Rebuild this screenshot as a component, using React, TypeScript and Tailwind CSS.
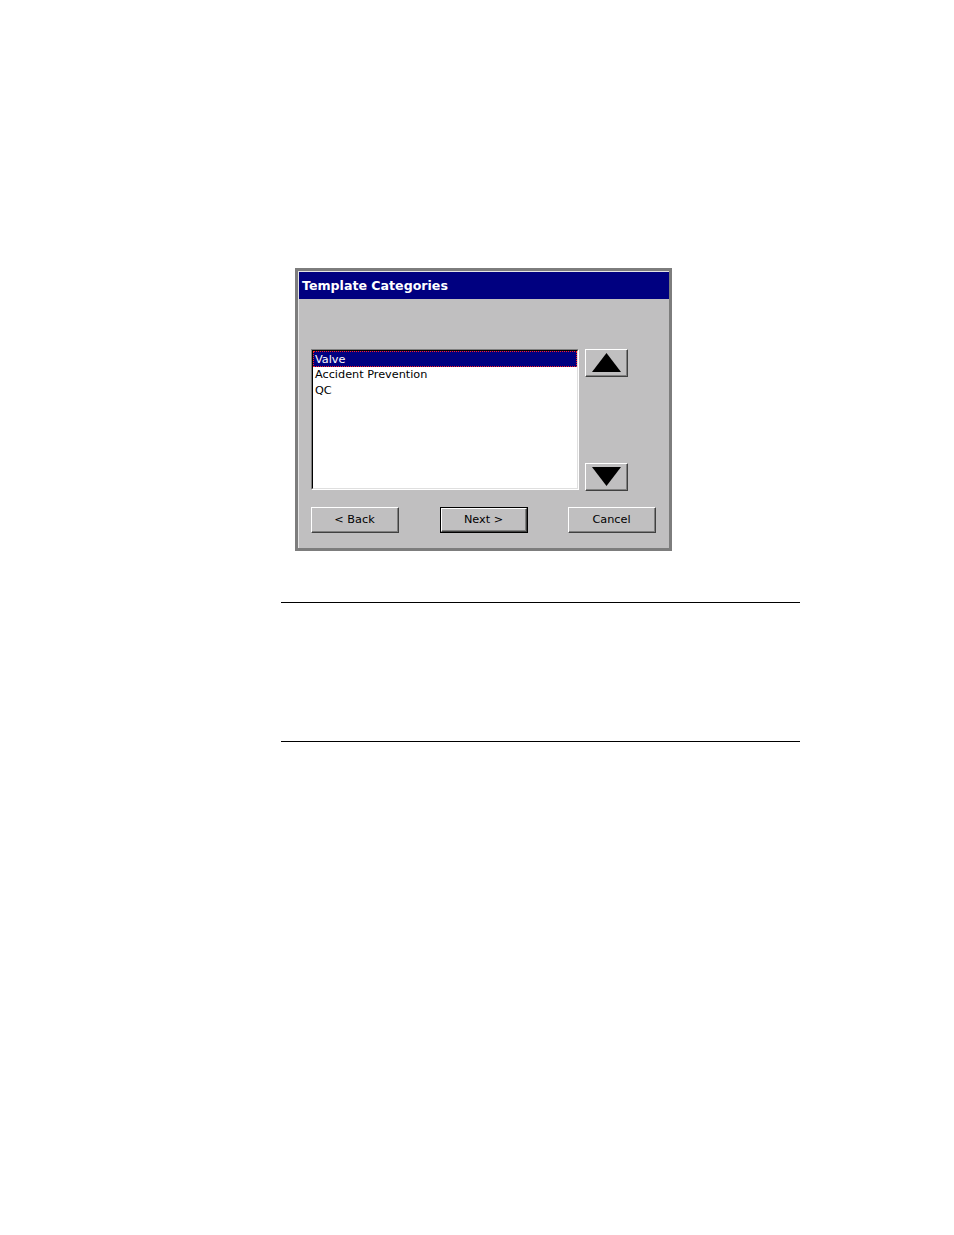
import React from 'react';

const font = { fontFamily: '"DejaVu Sans", Verdana, sans-serif' };

function WinButton({ label, isDefault }: { label: string; isDefault?: boolean }) {
  const inner = (
    <div className="h-full w-full border-t border-l border-t-white border-l-white border-r border-b border-r-[#404040] border-b-[#404040]">
      <div className="h-full w-full border-r border-b border-r-[#808080] border-b-[#808080] flex items-center justify-center pt-[2px] text-[11.25px] text-black">
        {label}
      </div>
    </div>
  );
  return (
    <div className={`h-[26px] w-[88px] ${isDefault ? 'border border-black' : ''}`}>
      {inner}
    </div>
  );
}

function ArrowButton({ dir }: { dir: 'up' | 'down' }) {
  return (
    <div className="h-[28px] w-[43px] border-t border-l border-t-white border-l-white border-r border-b border-r-[#404040] border-b-[#404040]">
      <div className="h-full w-full border-r border-b border-r-[#808080] border-b-[#808080] flex items-center justify-center">
        <svg width="31" height="21" viewBox="0 0 31 21">
          {dir === 'up' ? (
            <polygon points="15.5,1 30,20 1,20" fill="#000" />
          ) : (
            <polygon points="1,1 30,1 15.5,20" fill="#000" />
          )}
        </svg>
      </div>
    </div>
  );
}

export default function App() {
  const items = ['Valve', 'Accident Prevention', 'QC'];

  return (
    <div className="min-h-[1235px] w-[954px] bg-white" style={font}>
      <div className="pt-[268px] pl-[295px]">
        {/* dialog */}
        <div className="w-[377px] h-[283px] border-[3px] border-[#7d7d7d] bg-[#c0bfc0]">
          <div className="h-full w-full border-t border-l border-[#e4e4e4] flex flex-col">
            <div className="h-[27px] bg-[#000080] flex items-center pl-[3px] pt-[2px] text-white font-bold text-[12.6px] leading-none">
              Template Categories
            </div>

            <div className="flex pl-[12px] pt-[50px] gap-[6px]">
              {/* list box */}
              <div className="w-[268px] h-[141px] border-t border-l border-t-[#808080] border-l-[#808080] border-r border-b border-r-white border-b-white">
                <div className="h-full w-full border-t border-l border-t-black border-l-black border-r border-b border-r-[#dfdfdf] border-b-[#dfdfdf] bg-white text-[11.25px] text-black">
                  {items.map((it, i) => (
                    <div
                      key={it}
                      className={
                        i === 0
                          ? 'h-[16px] bg-[#000080] text-white border border-dotted border-[#ff2020] pl-[1px] leading-[15px]'
                          : 'h-[15.5px] pl-[2px] leading-[16.5px]'
                      }
                    >
                      {it}
                    </div>
                  ))}
                </div>
              </div>

              {/* scroll buttons */}
              <div className="flex flex-col justify-between h-[142px]">
                <ArrowButton dir="up" />
                <ArrowButton dir="down" />
              </div>
            </div>

            <div className="flex pl-[12px] pt-[16px]">
              <div className="w-[88px]">
                <WinButton label="< Back" />
              </div>
              <div className="ml-[41px]">
                <WinButton label="Next >" isDefault />
              </div>
              <div className="ml-[40px]">
                <WinButton label="Cancel" />
              </div>
            </div>
          </div>
        </div>
      </div>

      <div className="ml-[281px] mt-[51px] w-[519px] h-[1px] bg-black" />
      <div className="ml-[281px] mt-[138px] w-[519px] h-[1px] bg-black" />
    </div>
  );
}
